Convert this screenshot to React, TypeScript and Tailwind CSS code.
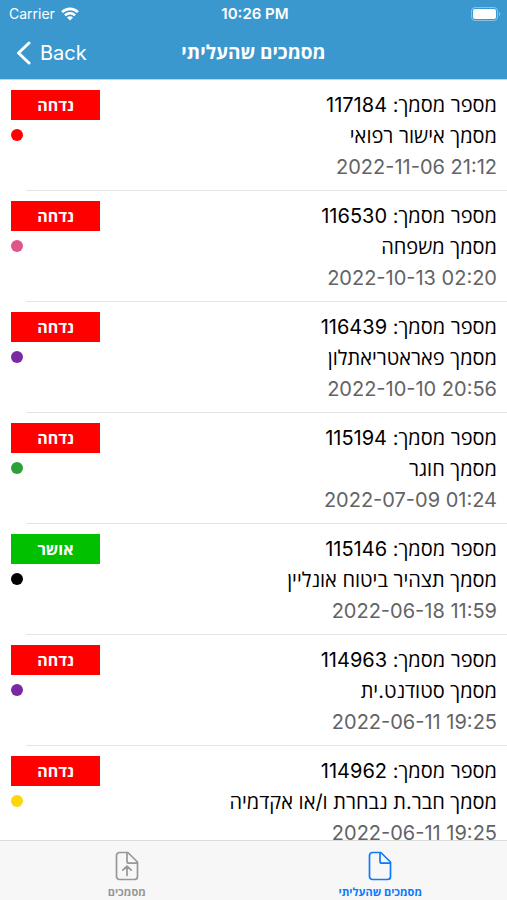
import { useState } from "react";

type Status = "rejected" | "approved";

interface Doc {
  id: number;
  name: string;
  date: string;
  status: Status;
  dot: string;
}

const DOCS: Doc[] = [
  { id: 117184, name: "אישור רפואי", date: "2022-11-06 21:12", status: "rejected", dot: "bg-[#ff0000]" },
  { id: 116530, name: "משפחה", date: "2022-10-13 02:20", status: "rejected", dot: "bg-[#e0558a]" },
  { id: 116439, name: "פאראטריאתלון", date: "2022-10-10 20:56", status: "rejected", dot: "bg-[#7b29a3]" },
  { id: 115194, name: "חוגר", date: "2022-07-09 01:24", status: "rejected", dot: "bg-[#2ea03a]" },
  { id: 115146, name: "תצהיר ביטוח אונליין", date: "2022-06-18 11:59", status: "approved", dot: "bg-black" },
  { id: 114963, name: "סטודנט.ית", date: "2022-06-11 19:25", status: "rejected", dot: "bg-[#7b29a3]" },
  { id: 114962, name: "חבר.ת נבחרת ו/או אקדמיה", date: "2022-06-11 19:25", status: "rejected", dot: "bg-[#ffd60a]" },
];

function WifiIcon() {
  return (
    <svg width="18" height="14" viewBox="0 0 18 14" aria-hidden="true">
      <path d="M9 13.6 12 10.5a4.2 4.2 0 0 0-6 0z" fill="#fff" />
      <path d="M4 8.3a7.1 7.1 0 0 1 10 0M1.1 5.1a11.2 11.2 0 0 1 15.8 0" fill="none" stroke="#fff" strokeWidth="2.6" />
    </svg>
  );
}

function BatteryIcon() {
  return (
    <svg width="30" height="14" viewBox="0 0 30 14" aria-hidden="true">
      <rect x="0.5" y="0.5" width="26" height="13" rx="3.5" fill="none" stroke="#fff" strokeOpacity="0.4" />
      <rect x="2" y="2" width="23" height="10" rx="2" fill="#fff" />
      <path d="M28 4.8c1.8.7 1.8 3.7 0 4.4z" fill="#fff" fillOpacity="0.4" />
    </svg>
  );
}

function FileIcon({ upload = false }: { upload?: boolean }) {
  return (
    <svg
      width="24"
      height="30"
      viewBox="0 0 24 30"
      fill="none"
      stroke="currentColor"
      strokeWidth="1.7"
      strokeLinecap="round"
      strokeLinejoin="round"
      aria-hidden="true"
    >
      <path d="M4.5 1.5h8.3L22.5 11v14.5a3 3 0 0 1-3 3h-15a3 3 0 0 1-3-3v-21a3 3 0 0 1 3-3z" />
      <path d="M12 1.8v8.4a2 2 0 0 0 2 2h8.2" />
      {upload && <path d="M12 24.5v-9M7.8 19.2l4.2-4.1 4.2 4.1" />}
    </svg>
  );
}

function DocRow({ doc }: { doc: Doc }) {
  const approved = doc.status === "approved";
  return (
    <li className="relative flex items-start justify-between pt-[10px] pr-[10px] pb-2 pl-[11px] after:absolute after:left-[26px] after:right-0 after:bottom-0 after:h-px after:bg-[#e4e4e6]">
      <div className="text-right text-xl leading-[31px] text-black">
        <p>
          מספר מסמך: {doc.id}
        </p>
        <p>מסמך {doc.name}</p>
        <p dir="ltr" className="text-[#636366]">{doc.date}</p>
      </div>
      <div className="flex flex-col items-end gap-[9px]">
        <span
          className={`flex h-[30px] w-[89px] items-center justify-center text-base font-bold text-white ${
            approved ? "bg-[#00c000]" : "bg-[#ff0000]"
          }`}
        >
          {approved ? "אושר" : "נדחה"}
        </span>
        <span className={`size-3 rounded-full ${doc.dot}`} />
      </div>
    </li>
  );
}

export default function App() {
  const [tab, setTab] = useState("uploaded");

  const tabClass = (name: string) =>
    `flex flex-1 flex-col items-center gap-[3px] pt-[10px] text-[11px] leading-4 font-bold ${
      tab === name ? "text-[#0a7aff]" : "text-[#979797]"
    }`;

  return (
    <div
      dir="rtl"
      className="flex h-screen flex-col overflow-hidden bg-white font-['Inter','Open_Sans',sans-serif]"
    >
      <header dir="ltr" className="shrink-0 border-b border-[#b5d8ec] bg-[#3a98cf] text-white">
        {/* Status bar */}
        <div className="grid h-[27px] grid-cols-3 items-center pl-[9px] pr-[6px] text-sm">
          <div className="flex items-center gap-[6px]">
            <span>Carrier</span>
            <WifiIcon />
          </div>
          <span className="text-center text-[15px] font-semibold">10:26 PM</span>
          <div className="flex justify-end">
            <BatteryIcon />
          </div>
        </div>
        {/* Nav bar */}
        <div className="grid h-[52px] grid-cols-[1fr_auto_1fr] items-center px-4">
          <button type="button" className="flex items-center gap-[9px] text-xl">
            <svg width="15" height="24" viewBox="0 0 15 24" fill="none" stroke="#fff" strokeWidth="3" strokeLinecap="round" strokeLinejoin="round" aria-hidden="true">
              <path d="M13 2 2.5 12 13 22" />
            </svg>
            Back
          </button>
          <h1 dir="rtl" className="text-[19px] font-bold">מסמכים שהעליתי</h1>
        </div>
      </header>

      <main className="min-h-0 flex-1 overflow-y-auto [scrollbar-width:none]">
        <ul>
          {DOCS.map((doc) => (
            <DocRow key={doc.id} doc={doc} />
          ))}
        </ul>
      </main>

      <nav className="flex h-[60px] shrink-0 border-t border-[#dcdcdc] bg-[#f7f7f7]">
        <button type="button" className={tabClass("uploaded")} onClick={() => setTab("uploaded")}>
          <FileIcon />
          מסמכים שהעליתי
        </button>
        <button type="button" className={tabClass("docs")} onClick={() => setTab("docs")}>
          <FileIcon upload />
          מסמכים
        </button>
      </nav>
    </div>
  );
}
